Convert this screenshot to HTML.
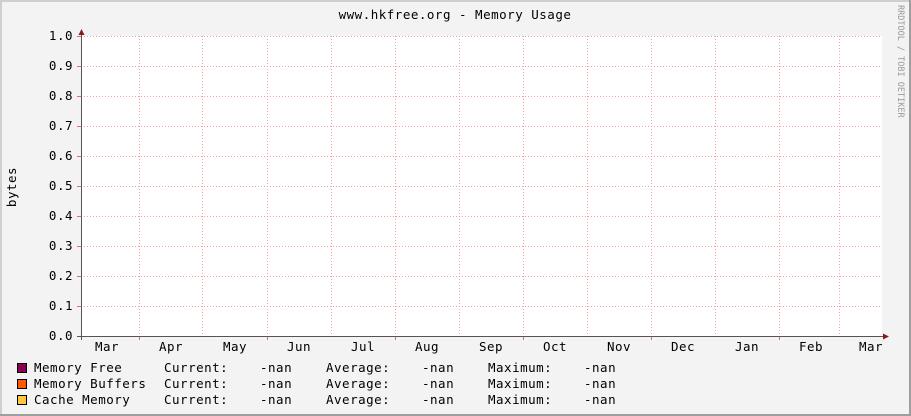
<!DOCTYPE html>
<html><head><style>
html,body{margin:0;padding:0;width:911px;height:416px;overflow:hidden;background:#f3f3f3}
svg{display:block}
text{font-family:"DejaVu Sans Mono","Liberation Mono",monospace;font-size:12.5px;fill:#000;letter-spacing:0.5px}
</style></head><body>
<svg width="911" height="416" viewBox="0 0 911 416">
<rect x="0" y="0" width="911" height="416" fill="#f3f3f3"/>
<rect x="0" y="0" width="911" height="2" fill="#cfcfcf"/>
<rect x="0" y="0" width="2" height="416" fill="#cfcfcf"/>
<rect x="909" y="0" width="2" height="416" fill="#9e9e9e"/>
<rect x="0" y="414" width="911" height="2" fill="#9e9e9e"/>
<rect x="81" y="36" width="801" height="300" fill="#fff"/>
<g stroke="#f4a0a0" stroke-width="1" stroke-dasharray="1,2" fill="none">
<path d="M81 36.5H882M81 66.5H882M81 96.5H882M81 126.5H882M81 156.5H882M81 186.5H882M81 216.5H882M81 246.5H882M81 276.5H882M81 306.5H882"/>
<path d="M139.5 36V336M202.5 36V336M267.5 36V336M331.5 36V336M395.5 36V336M459.5 36V336M523.5 36V336M587.5 36V336M651.5 36V336M715.5 36V336M779.5 36V336M839.5 36V336"/>
</g>
<g stroke="#e07070" stroke-width="1">
<path d="M77 36.5H81M77 66.5H81M77 96.5H81M77 126.5H81M77 156.5H81M77 186.5H81M77 216.5H81M77 246.5H81M77 276.5H81M77 306.5H81M77 336.5H81"/>
<path d="M139.5 336V340M267.5 336V340M395.5 336V340M523.5 336V340M651.5 336V340M779.5 336V340"/>
</g>
<g stroke="#555" stroke-width="1">
<path d="M81.5 33V340M77 336.5H885"/>
</g>
<path d="M78.5 35L81.5 29L84.5 35Z" fill="#8b1a1a"/>
<path d="M883 333.5L889 336.5L883 339.5Z" fill="#8b1a1a"/>
<text x="455" y="19" text-anchor="middle">www.hkfree.org - Memory Usage</text>
<g text-anchor="end">
<text x="73" y="40">1.0</text><text x="73" y="70">0.9</text><text x="73" y="100">0.8</text><text x="73" y="130">0.7</text><text x="73" y="160">0.6</text><text x="73" y="190">0.5</text><text x="73" y="220">0.4</text><text x="73" y="250">0.3</text><text x="73" y="280">0.2</text><text x="73" y="310">0.1</text><text x="73" y="340">0.0</text>
</g>
<text x="0" y="0" transform="translate(16,187) rotate(-90)" text-anchor="middle">bytes</text>
<g text-anchor="middle">
<text x="107" y="351">Mar</text><text x="171" y="351">Apr</text><text x="235" y="351">May</text><text x="299" y="351">Jun</text><text x="363" y="351">Jul</text><text x="427" y="351">Aug</text><text x="491" y="351">Sep</text><text x="555" y="351">Oct</text><text x="619" y="351">Nov</text><text x="683" y="351">Dec</text><text x="747" y="351">Jan</text><text x="811" y="351">Feb</text><text x="871" y="351">Mar</text>
</g>
<text x="0" y="0" transform="translate(898,5) rotate(90)" style="font-size:8.5px;fill:#999;letter-spacing:0px">RRDTOOL / TOBI OETIKER</text>
<rect x="17.5" y="363.5" width="9" height="9" fill="#8b0050" stroke="#000"/>
<rect x="17.5" y="379.5" width="9" height="9" fill="#ff5a00" stroke="#000"/>
<rect x="17.5" y="395.5" width="9" height="9" fill="#ffc83c" stroke="#000"/>
<g>
<text x="34" y="372">Memory Free</text><text x="164" y="372">Current:</text><text x="260" y="372">-nan</text><text x="326" y="372">Average:</text><text x="422" y="372">-nan</text><text x="488" y="372">Maximum:</text><text x="584" y="372">-nan</text>
<text x="34" y="388">Memory Buffers</text><text x="164" y="388">Current:</text><text x="260" y="388">-nan</text><text x="326" y="388">Average:</text><text x="422" y="388">-nan</text><text x="488" y="388">Maximum:</text><text x="584" y="388">-nan</text>
<text x="34" y="404">Cache Memory</text><text x="164" y="404">Current:</text><text x="260" y="404">-nan</text><text x="326" y="404">Average:</text><text x="422" y="404">-nan</text><text x="488" y="404">Maximum:</text><text x="584" y="404">-nan</text>
</g>
</svg>
</body></html>
